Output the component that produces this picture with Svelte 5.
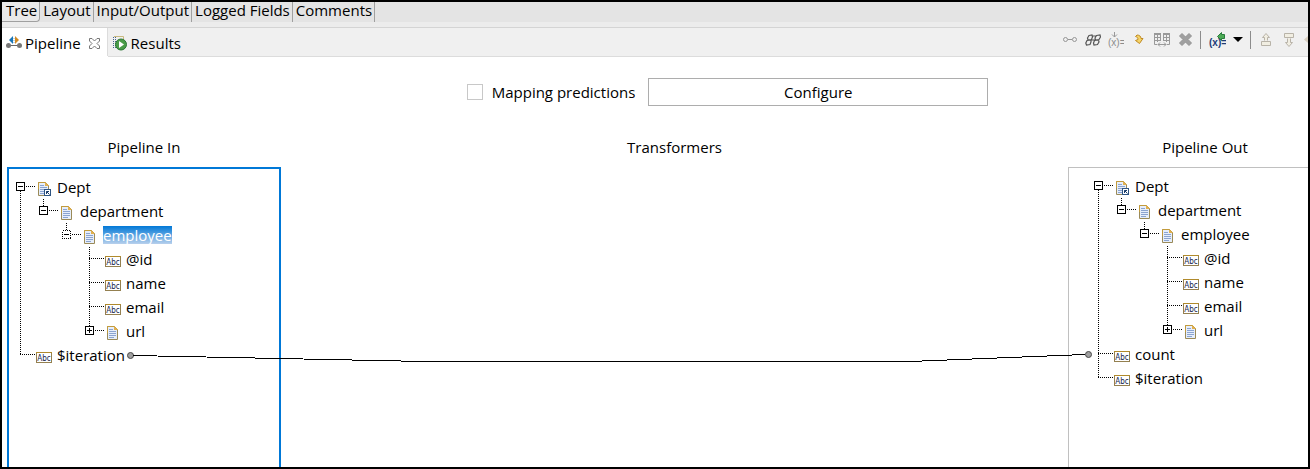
<script>
  const editorTabs = ['Tree', 'Layout', 'Input/Output', 'Logged Fields', 'Comments'];
  let activeEditor = $state('Tree');
  let predictions = $state(false);

  // guides: depths whose connector runs through the row; below: connectors that start under it
  const branch = (extra) => [
    { label: 'Dept', depth: 0, kind: 'ref', box: '-', below: [0, 1] },
    { label: 'department', depth: 1, kind: 'doc', box: '-', above: true, guides: [0], below: [2] },
    { label: 'employee', depth: 2, kind: 'doc', box: '-', above: true, guides: [0], below: [3], ...extra },
    { label: '@id', depth: 3, kind: 'abc', above: true, guides: [0, 3] },
    { label: 'name', depth: 3, kind: 'abc', above: true, guides: [0, 3] },
    { label: 'email', depth: 3, kind: 'abc', above: true, guides: [0, 3] },
    { label: 'url', depth: 3, kind: 'doc', box: '+', above: true, guides: [0] }
  ];
  const inRows = [
    ...branch({ selected: true }),
    { label: '$iteration', depth: 0, kind: 'abc', above: true, port: 'out' }
  ];
  const outRows = [
    ...branch({}),
    { label: 'count', depth: 0, kind: 'abc', above: true, guides: [0], port: 'in' },
    { label: '$iteration', depth: 0, kind: 'abc', above: true }
  ];
  const cx = (d) => 4 + 23 * d;
</script>

{#snippet nodeIcon(kind)}
  <svg class="node-icon" width="16" height="24" viewBox="0 0 16 24" aria-hidden="true">
    {#if kind === 'abc'}
      <rect x="0.5" y="9.5" width="15" height="10" fill="#fff" stroke="#948050" />
      <path d="M0 9.500H16" stroke="#b08a2c" />
      <text x="8" y="18" text-anchor="middle" class="abc">Abc</text>
    {:else}
      <path d="M2.500 7.500H9.500L12.500 10.500V20.500H2.500Z" fill="#e6eefb" stroke="#9a8a58" />
      <path d="M2.500 14V7.500H9.500L12.500 10.500" fill="none" stroke="#c29b3c" />
      <path d="M9 7L13 11H9Z" fill="#e0b050" />
      <path d="M4 10.500H8M4 12.500H11M4 14.500H11M4 16.500H11M4 18.500H9" stroke="#8ba4d0" />
      {#if kind === 'ref'}
        <rect x="8.500" y="14.500" width="6" height="6" fill="#fff" stroke="#2e5482" />
        <path d="M10.500 19V16.500H13M10.500 16.500L13.500 19.500" fill="none" stroke="#173a68" />
      {/if}
    {/if}
  </svg>
{/snippet}

{#snippet port()}
  <svg class="port" width="7" height="7" viewBox="0 0 7 7" aria-hidden="true">
    <circle cx="3.5" cy="3.5" r="3" fill="#a0a0a0" stroke="#484848" />
  </svg>
{/snippet}

{#snippet tree(rows, name)}
  <ul class="tree" role="tree" aria-label={name}>
    {#each rows as r}
      {@const x = cx(r.depth)}
      <li class="node" role="treeitem" aria-level={r.depth + 1} aria-selected={!!r.selected}>
        {#if r.port === 'in'}<span class="port-in">{@render port()}</span>{/if}
        <svg class="gutter" width={20 + 23 * r.depth} height="24" aria-hidden="true">
          <g stroke="#000" stroke-dasharray="1 1" fill="none">
            {#each r.guides ?? [] as g}<path d="M{cx(g) + 0.5} 0V24" />{/each}
            {#each r.below ?? [] as b}<path d="M{cx(b) + 0.5} {b > r.depth ? 21 : 16}V24" />{/each}
            {#if r.above}<path d="M{x + 0.5} 0V11" />{/if}
            <path d="M{x} 11.500H{x + 15}" />
          </g>
          {#if r.box}
            <rect x={x - 4 + 0.5} y="7.5" width="8" height="8" fill="#fff" stroke="#000" stroke-dasharray={r.selected ? '1 1' : undefined} />
            <path d="M{x - 2} 11.500H{x + 3}" stroke="#000" />
            {#if r.box === '+'}<path d="M{x + 0.5} 9V14" stroke="#000" />{/if}
          {/if}
        </svg>
        {@render nodeIcon(r.kind)}
        <span class="label" class:selected={r.selected}>{r.label}</span>
        {#if r.port === 'out'}{@render port()}{/if}
      </li>
    {/each}
  </ul>
{/snippet}

<div class="window">
  <nav class="editor-tabs">
    {#each editorTabs as t}
      <button class:active={activeEditor === t} onclick={() => (activeEditor = t)}>{t}</button>
    {/each}
  </nav>

  <header class="views">
    <button class="view active">
      <svg width="16" height="16" viewBox="0 0 16 16" aria-hidden="true">
        <path d="M3 10.500H13" stroke="#666" />
        <circle cx="2.500" cy="10.500" r="2.500" fill="#777" />
        <circle cx="13.500" cy="10.500" r="2.500" fill="#777" />
        <path d="M3 5L7 1V9Z" fill="#1976b8" />
        <path d="M13 5L9 1V9Z" fill="#d18a24" />
        <path d="M8 3V9" stroke="#76a9cf" stroke-dasharray="1 1" />
      </svg>
      <span>Pipeline</span>
      <svg class="close" width="11" height="11" viewBox="0 0 11 11" aria-hidden="true">
        <path d="M.5.5H3L5.500 3L8 .5H10.500V3L8 5.500L10.500 8V10.500H8L5.500 8L3 10.500H.5V8L3 5.500L.5 3Z" fill="#fff" stroke="#777" />
      </svg>
    </button>
    <button class="view">
      <svg width="16" height="16" viewBox="0 0 16 16" aria-hidden="true">
        <path d="M2 1.500H11.500V5" fill="none" stroke="#c9b980" />
        <path d="M1.500 2V14M3.500 2V14" stroke="#46658e" stroke-dasharray="1 1" />
        <circle cx="9" cy="9.500" r="5.500" fill="#4a9c48" stroke="#2c7736" />
        <path d="M7 6L12 9.500L7 13Z" fill="#fff" />
      </svg>
      <span>Results</span>
    </button>

    <div class="toolbar">
      <button aria-label="Link">
        <svg width="16" height="16" viewBox="0 0 16 16" fill="none" stroke="#969696">
          <circle cx="3.500" cy="7.500" r="2" /><circle cx="12.500" cy="7.500" r="2" /><path d="M6 7.500H10" />
        </svg>
      </button>
      <button aria-label="Find">
        <svg width="16" height="16" viewBox="0 0 16 16" fill="none" stroke="#555" stroke-width="1.200">
          <path d="M4 3.500L7 3L7.500 5L6.500 7.500L3 8L2.500 6ZM2 8.500L6 8L6 10L5 12.500L1.500 13L.8 11ZM11.500 3.500L15 3L15.500 5L14 7.500L10.500 8L10 6ZM9.500 8.500L13.500 8L14 10L12.500 12.500L9 13L8.500 11ZM6 8H10M7 4H11" />
        </svg>
      </button>
      <button aria-label="Add variable">
        <svg width="16" height="16" viewBox="0 0 16 16">
          <path d="M6.500 0V5M4 2.500L6.500 5L9 2.500" fill="none" stroke="#999" />
          <text x="0" y="14" class="var muted">(x)=</text>
        </svg>
      </button>
      <button aria-label="Step">
        <svg width="16" height="16" viewBox="0 0 16 16">
          <path d="M4.500 4.500L6 3C8.500 3 10 4.500 10 6.500H12L8.500 11.500L4.500 8.500L7 7.500C7 5.500 6 5 4.500 4.500Z" fill="#f5d468" stroke="#c08a24" />
        </svg>
      </button>
      <button aria-label="Map columns">
        <svg width="16" height="16" viewBox="0 0 16 16" fill="none" stroke="#999">
          <path d="M0 2H7M9 2H16" stroke-width="2" />
          <path d="M.5 12.500V1.500H6.500V9M9.500 9V1.500H15.500V12.500H13M.5 12.500H3M.5 5.500H6.500M9.500 5.500H15.500M.5 8.500H6M10 8.500H15.500M3.500 2V10M12.500 2V10M4 12.500H12M6 10.500L4 12.500L6 14.500M10 10.500L12 12.500L10 14.500" />
        </svg>
      </button>
      <button aria-label="Delete">
        <svg width="16" height="16" viewBox="0 0 16 16">
          <path d="M2.500 4L5 1.500L8.500 5L12 1.500L14.500 4L11 7.500L14.500 11L12 13.500L8.500 10L5 13.500L2.500 11L6 7.500Z" fill="#a0a0a0" stroke="#939393" />
        </svg>
      </button>
      <i class="divider"></i>
      <button aria-label="Variables">
        <svg width="18" height="16" viewBox="0 0 18 16">
          <text x="1" y="14" class="var strong">(x)=</text>
          <path d="M9.500 4.500L13.500 .5V2.500H16.500V6.500H13.500V8.500Z" fill="#4caa54" stroke="#287c3c" />
        </svg>
      </button>
      <button class="menu" aria-label="Variables menu">
        <svg width="10" height="16" viewBox="0 0 10 16"><path d="M0 5H10L5 10Z" fill="#000" /></svg>
      </button>
      <i class="divider"></i>
      <button aria-label="Move up">
        <svg width="16" height="16" viewBox="0 0 16 16" fill="#f1eee2" stroke="#b8b3a8">
          <path d="M6.500 8.500V5.500H4.500L8 1.500L11.500 5.500H9.500V8.500" /><path d="M3.500 9.500H12.500V13.500H3.500Z" />
        </svg>
      </button>
      <button aria-label="Move down">
        <svg width="16" height="16" viewBox="0 0 16 16" fill="#f1eee2" stroke="#b8b3a8">
          <path d="M6.500 6.500V10.500H4.500L8 14.500L11.500 10.500H9.500V6.500" /><path d="M3.500 1.500H12.500V5.500H3.500Z" />
        </svg>
      </button>
      <button aria-label="Move left">
        <svg width="16" height="16" viewBox="0 0 16 16" fill="#d8cfc0"><path d="M0 7.500L4 4V11Z" /></svg>
      </button>
    </div>
  </header>

  <main>
    <div class="config">
      <label><input type="checkbox" bind:checked={predictions} />Mapping predictions</label>
      <button>Configure</button>
    </div>

    <div class="mapper">
      <h2>Pipeline In</h2>
      <h2>Transformers</h2>
      <h2>Pipeline Out</h2>
      <section class="panel source">{@render tree(inRows, 'Pipeline In')}</section>
      <section class="canvas"></section>
      <section class="panel target">{@render tree(outRows, 'Pipeline Out')}</section>
      <svg class="wire" viewBox="0 0 959 8" preserveAspectRatio="none" aria-hidden="true">
        <path d="M4 1.500L296 7.500H781L956 .5" />
      </svg>
    </div>
  </main>
</div>

<style>
  :global(body) { margin: 0; }
  .window {
    box-sizing: border-box;
    min-height: 100vh;
    display: flex;
    flex-direction: column;
    border: 2px solid #000;
    overflow: hidden;
    background: #fff;
    color: #000;
    font: 15px/20px "Open Sans", "Noto Sans CJK KR", sans-serif;
  }
  button {
    margin: 0;
    padding: 0;
    border: 0;
    background: none;
    color: inherit;
    font: inherit;
  }
  svg { display: block; flex: none; }

  .editor-tabs {
    display: flex;
    height: 20px;
    background: #e4e4e4;
  }
  .editor-tabs button {
    box-sizing: border-box;
    padding: 0 2px 4px 3px;
    line-height: 16px;
    border-right: 1px solid #a0a0a0;
    white-space: nowrap;
  }
  .editor-tabs button.active {
    padding: 0 2px 3px 4px;
    border-bottom: 1px solid #a0a0a0;
    border-bottom-right-radius: 4px;
    background: #e9e9e9;
  }

  .views {
    display: flex;
    height: 28px;
    margin-top: 5px;
    border-top: 1px solid #d4d4d4;
    border-bottom: 1px solid #dcdcdc;
    background: #f0f0f0;
    box-shadow: 0 -5px #ececec;
  }
  .view {
    display: flex;
    align-items: center;
    gap: 3px;
    padding: 2px 4px 0;
  }
  .view.active {
    padding: 2px 7px 0 4px;
    border-right: 1px solid #dcdcdc;
    background: #fff;
    box-shadow: 0 1px #fff;
  }
  .close { margin-left: 5px; }
  .toolbar {
    display: flex;
    align-items: center;
    gap: 7px;
    height: 24px;
    margin-left: auto;
    margin-right: -12px;
  }
  .toolbar button { min-width: 16px; }
  .toolbar .menu { min-width: 10px; }
  .divider { width: 1px; height: 18px; background: #8c8c8c; }
  .var { font: 10px "Liberation Sans", sans-serif; fill: #1c3c78; }
  .strong { font-weight: bold; }
  .muted { fill: #8c8c8c; }

  main {
    flex: 1;
    display: flex;
    flex-direction: column;
  }
  .config {
    display: flex;
    justify-content: center;
    align-items: center;
    gap: 13px;
    padding: 21px 0 0 145px;
  }
  .config label {
    display: flex;
    align-items: center;
    gap: 9px;
  }
  .config input {
    appearance: none;
    box-sizing: border-box;
    width: 16px;
    height: 16px;
    margin: 0;
    border: 1px solid #c8c8c8;
    background: #fff;
  }
  .config input:checked { background: #0078d7; }
  .config button {
    box-sizing: border-box;
    width: 340px;
    height: 28px;
    border: 1px solid #adadad;
    background: #fff;
  }
  .mapper {
    position: relative;
    flex: 1;
    display: grid;
    grid-template-columns: 274px 1fr 274px;
    grid-template-rows: 20px 1fr;
    row-gap: 10px;
    margin: 31px -34px 0 5px;
  }
  h2 {
    margin: 0;
    font: inherit;
    text-align: center;
  }
  .panel { padding-top: 6px; }
  .source {
    padding-left: 7px;
    border: 2px solid #0078d7;
    border-bottom: 0;
  }
  .target {
    padding-left: 25px;
    border: 1px solid #c0c0c0;
    border-bottom: 0;
  }
  .tree {
    margin: 0;
    padding: 0;
    list-style: none;
  }
  .node {
    position: relative;
    display: flex;
    align-items: center;
    height: 24px;
  }
  .gutter { shape-rendering: crispEdges; }
  .abc { font: 8px "DejaVu Sans Condensed", "DejaVu Sans", sans-serif; fill: #10204c; }
  .label { margin-left: 5px; line-height: 18px; }
  .label.selected {
    color: #fff;
    background: linear-gradient(#0078d7, #b8d0ec);
  }
  .port { margin-left: 2px; }
  .port-in {
    position: absolute;
    left: -11px;
  }
  .wire {
    position: absolute;
    top: 217px;
    left: 122px;
    width: calc(100% - 376px);
    height: 8px;
    pointer-events: none;
  }
  .wire path {
    fill: none;
    stroke: #000;
    vector-effect: non-scaling-stroke;
    shape-rendering: crispEdges;
  }
</style>
